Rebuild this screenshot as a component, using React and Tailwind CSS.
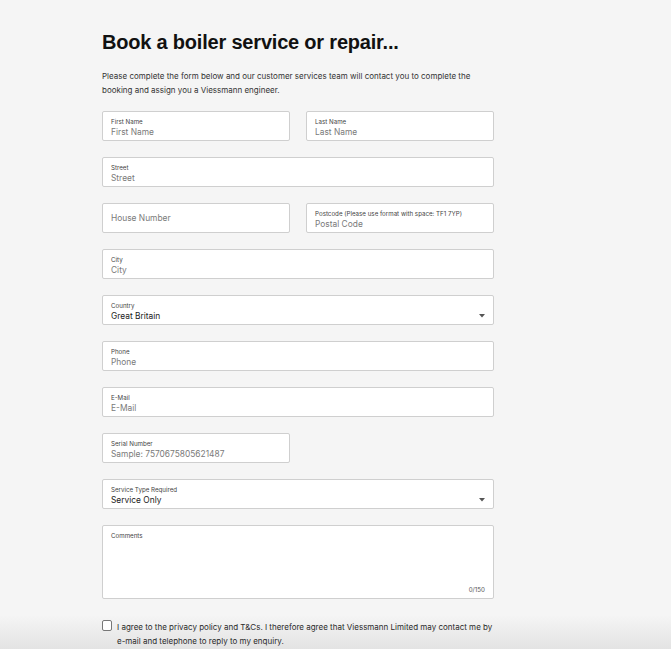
import React from 'react';

const font = { fontFamily: 'Inter, "Liberation Sans", sans-serif' };

function Field({ label, value, dark, select, className = '' }) {
    return (
        <div className={`relative h-[30px] bg-white border border-[#cfcfcf] rounded-[2px] pl-[8px] flex flex-col ${label ? 'pt-[5px]' : 'justify-center'} ${className}`}>
            {label && <div className="text-[6.2px] leading-[9px] text-[#444]">{label}</div>}
            <div className={`text-[8.4px] leading-[12px] ${dark ? 'text-[#222]' : 'text-[#7a7a7a]'}`}>{value}</div>
            {select && (
                <svg className="absolute right-[8px] top-[18px]" width="6" height="4" viewBox="0 0 6 4">
                    <path d="M0 0 H6 L3 3.5 Z" fill="#555" />
                </svg>
            )}
        </div>
    );
}

export default function App() {
    return (
        <div className="relative min-h-[649px] bg-[#f5f5f5] overflow-hidden" style={font}>
            {/* bottom shade */}
            <div className="pointer-events-none absolute left-0 right-0 bottom-0 h-[34px] bg-gradient-to-b from-[#f5f5f5]/0 to-[#e3e3e3]" />

            <div className="relative w-[392px] ml-[102px] pt-[29px]">
                <h1 className="text-[20px] leading-[26px] font-bold text-[#111] tracking-[-0.2px]" style={{ fontFamily: '"Liberation Sans", Arial, sans-serif' }}>
                    Book a boiler service or repair...
                </h1>
                <p className="mt-[14px] text-[8px] leading-[14px] text-[#333]">
                    Please complete the form below and our customer services team will contact you to complete the booking and assign you a Viessmann engineer.
                </p>

                <div className="mt-[14px] flex flex-col gap-[16px]">
                    <div className="grid grid-cols-2 gap-[16px]">
                        <Field label="First Name" value="First Name" />
                        <Field label="Last Name" value="Last Name" />
                    </div>
                    <Field label="Street" value="Street" />
                    <div className="grid grid-cols-2 gap-[16px]">
                        <Field value="House Number" />
                        <Field label="Postcode (Please use format with space: TF1 7YP)" value="Postal Code" />
                    </div>
                    <Field label="City" value="City" />
                    <Field label="Country" value="Great Britain" dark select />
                    <Field label="Phone" value="Phone" />
                    <Field label="E-Mail" value="E-Mail" />
                    <Field label="Serial Number" value="Sample: 7570675805621487" className="w-[188px]" />
                    <Field label="Service Type Required" value="Service Only" dark select />
                    <div className="relative h-[74px] bg-white border border-[#cfcfcf] rounded-[2px] pl-[8px] pt-[5px]">
                        <div className="text-[6.2px] leading-[9px] text-[#444]">Comments</div>
                        <div className="absolute right-[8px] bottom-[4px] text-[6.2px] text-[#555]">0/150</div>
                    </div>
                </div>

                <div className="mt-[21px] flex items-start gap-[5px]">
                    <div className="w-[10px] h-[11px] shrink-0 border border-[#777] rounded-[2px] bg-white" />
                    <p className="text-[8px] leading-[14px] text-[#2a2a2a] mt-[0px]">
                        I agree to the privacy policy and T&amp;Cs. I therefore agree that Viessmann Limited may contact me by e-mail and telephone to reply to my enquiry.
                    </p>
                </div>
            </div>
        </div>
    );
}
